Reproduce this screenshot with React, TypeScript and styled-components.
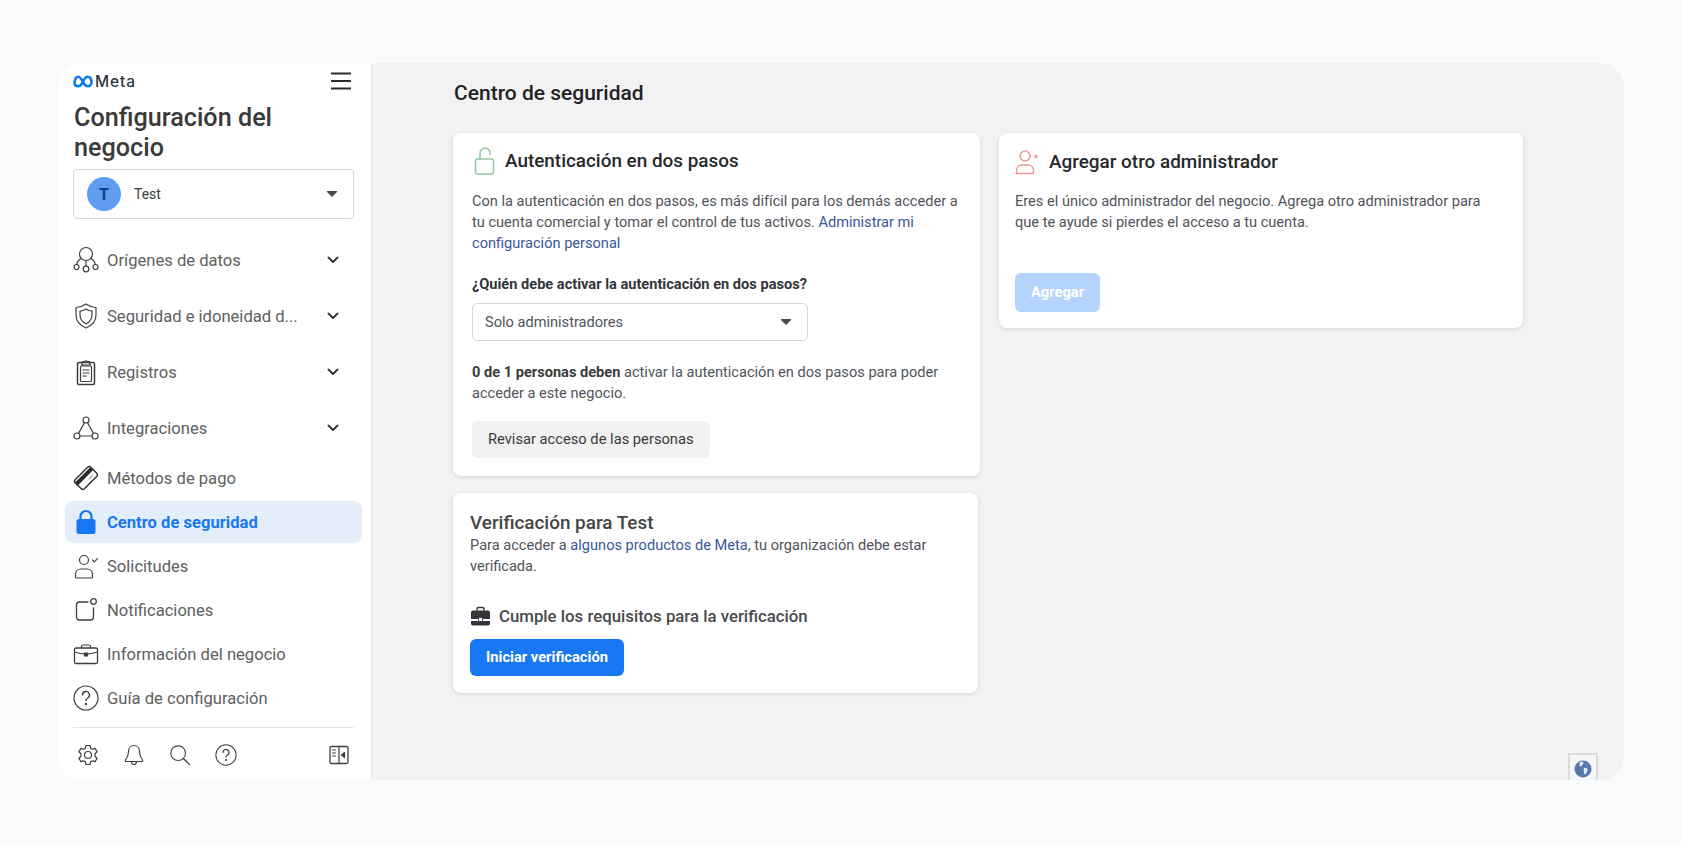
import React from 'react'
import styled, { createGlobalStyle } from 'styled-components'

const GlobalStyle = createGlobalStyle`
  html, body {
    margin: 0;
    padding: 0;
    background: #f9fafc;
    font-family: Roboto, "Liberation Sans", sans-serif;
  }
  * { box-sizing: border-box; }
`

const Page = styled.div`
  width: 1681px;
  height: 845px;
  padding: 63px 57px 65px;
  background: #f9fafc;
  overflow: hidden;
`

const Frame = styled.div`
  height: 717px;
  display: flex;
  border-radius: 24px;
  overflow: hidden;
  background: #f2f2f2;
`

const Sidebar = styled.aside`
  width: 315px;
  flex-shrink: 0;
  background: #fff;
  border-right: 1px solid #e4e4e4;
  padding: 8px 0 0 0;
  display: flex;
  flex-direction: column;
`

const TopRow = styled.div`
  height: 20px;
  padding: 0 20px 0 16px;
  display: flex;
  justify-content: space-between;
  align-items: center;
`

const Logo = styled.div`
  display: flex;
  align-items: center;
  gap: 2px;
`

const LogoWord = styled.span`
  font-family: Inter, Roboto, sans-serif;
  font-size: 15.500px;
  font-weight: 500;
  color: #2d3640;
  letter-spacing: 0.9px;
`

const Title = styled.h1`
  margin: 12px 0 0;
  padding: 0 0 0 17px;
  width: 280px;
  font-size: 25.200px;
  line-height: 30px;
  font-weight: 500;
  color: #3a3a3a;
`

const AccountBox = styled.div`
  margin: 6px 0 13px 16px;
  width: 281px;
  height: 50px;
  padding: 0 15px 0 13px;
  display: flex;
  align-items: center;
  border: 1px solid #d4d6da;
  border-radius: 4px;
  background: #fff;
`

const Avatar = styled.div`
  width: 34px;
  height: 34px;
  border-radius: 50%;
  background: #5f9df0;
  color: #0e3f8a;
  font-size: 16px;
  font-weight: 700;
  display: flex;
  align-items: center;
  justify-content: center;
`

const AccountName = styled.span`
  margin-left: 13px;
  flex: 1;
  font-size: 14px;
  color: #3c3c3c;
`

const Caret = styled.span`
  width: 0;
  height: 0;
  border-left: 6px solid transparent;
  border-right: 6px solid transparent;
  border-top: 6px solid #4a4a4a;
  border-radius: 2px;
`

const Nav = styled.nav`
  display: flex;
  flex-direction: column;
`

const NavRow = styled.div<{ $tall?: boolean; $active?: boolean }>`
  height: ${p => (p.$tall ? '56px' : '44px')};
  display: flex;
  align-items: center;
  padding: 0 32px 0 16px;
  font-size: 16.600px;
  color: ${p => (p.$active ? '#1877f2' : '#606060')};
  font-weight: ${p => (p.$active ? 700 : 400)};
  position: relative;
  z-index: 0;
  ${p =>
    p.$active &&
    `
    &::before {
      content: '';
      position: absolute;
      left: 8px;
      right: 9px;
      top: 1px;
      bottom: 1px;
      background: #e3eefa;
      border-radius: 8px;
      z-index: -1;
    }
  `}
`

const NavIcon = styled.span`
  width: 26px;
  height: 26px;
  margin-right: 8px;
  display: flex;
  align-items: center;
  justify-content: center;
  flex-shrink: 0;
`

const NavLabel = styled.span`
  flex: 1;
  white-space: nowrap;
`

const Divider = styled.div`
  margin: 7px 17px 0 16px;
  height: 1px;
  background: #e4e4e4;
`

const BottomBar = styled.div`
  display: flex;
  align-items: center;
  padding: 16px 0 0 20px;
`

const BottomIcon = styled.span<{ $push?: boolean }>`
  width: ${p => (p.$push ? 'auto' : '46px')};
  flex-shrink: 0;
  display: flex;
  justify-content: flex-start;
  margin-left: ${p => (p.$push ? '68px' : '0')};
`

const Main = styled.main`
  flex: 1;
  position: relative;
  padding: 16px 0 0 81px;
`

const Heading = styled.h2`
  margin: 0 0 26px 1px;
  font-size: 21px;
  line-height: 28px;
  font-weight: 500;
  color: #1f2226;
`

const Columns = styled.div`
  display: flex;
  gap: 19px;
  align-items: flex-start;
`

const Column = styled.div<{ $width: number }>`
  width: ${p => p.$width}px;
  display: flex;
  flex-direction: column;
  gap: 17px;
`

const Card = styled.section<{ $pad: string; $inset?: number }>`
  background: #fff;
  border-radius: 8px;
  box-shadow: 0 1px 4px rgba(0, 0, 0, 0.12);
  padding: ${p => p.$pad};
  margin-right: ${p => p.$inset ?? 0}px;
`

const CardHead = styled.div<{ $gap: number }>`
  height: 28px;
  display: flex;
  align-items: center;
  gap: ${p => p.$gap}px;
`

const CardTitle = styled.h3`
  margin: 0;
  font-size: 18.900px;
  line-height: 24px;
  font-weight: 500;
  color: #26282b;
`

const PlainTitle = styled(CardTitle)`
  color: #444;
`

const Text = styled.p<{ $top?: number }>`
  margin: ${p => p.$top ?? 0}px 0 0;
  font-size: 14.600px;
  line-height: 21px;
  color: #50545b;
`

const Strong = styled.strong`
  font-weight: 700;
  color: #3a3a3a;
`

const Link = styled.a`
  color: #385898;
`

const Label = styled.div`
  margin-top: 20px;
  font-size: 14.600px;
  line-height: 21px;
  font-weight: 700;
  color: #33363a;
`

const Select = styled.div`
  margin-top: 8px;
  width: 336px;
  height: 38px;
  padding: 0 15px 0 12px;
  display: flex;
  align-items: center;
  justify-content: space-between;
  border: 1px solid #d4d6da;
  border-radius: 5px;
  font-size: 14.600px;
  color: #50545b;
`

const Button = styled.button<{ $kind: 'gray' | 'blue' | 'pale' }>`
  display: block;
  border: none;
  border-radius: 6px;
  font-family: inherit;
  font-size: 14.700px;
  padding: 0 16px 1px;
  height: ${p => (p.$kind === 'pale' ? '39px' : '37px')};
  font-weight: ${p => (p.$kind === 'gray' ? 400 : 700)};
  background: ${p => (p.$kind === 'gray' ? '#f1f1f1' : p.$kind === 'blue' ? '#1877f2' : '#b3d5fd')};
  color: ${p => (p.$kind === 'gray' ? '#3a3a3a' : '#fff')};
`

const GrayButton = styled(Button)`
  margin-top: 17px;
`

const BlueButton = styled(Button)`
  margin-top: 11px;
`

const PaleButton = styled(Button)`
  margin-top: 40px;
`

const Requirement = styled.div`
  margin-top: 27px;
  height: 24px;
  display: flex;
  align-items: center;
  gap: 8px;
  font-size: 16.800px;
  font-weight: 500;
  color: #484a4e;
`

const GlobeTab = styled.div`
  position: absolute;
  right: 26px;
  bottom: 0;
  width: 30px;
  height: 27px;
  background: #f5f6f7;
  border: 2px solid #d9dbde;
  border-bottom: none;
  border-radius: 2px 2px 0 0;
  display: flex;
  justify-content: center;
  padding-top: 5px;
`

const ico = { fill: 'none', stroke: '#3f3f3f', strokeWidth: 1.2, strokeLinecap: 'round', strokeLinejoin: 'round' } as const

const MetaMark = () => (
  <svg width="20" height="13" viewBox="0 0 20 13">
    <path
      d="M1.500 8.300C1.500 4.500 3 1.800 5 1.800c2.200 0 3.800 2.800 5 5 1.200 2.400 2.400 4.400 4.600 4.400 2.300 0 3.900-1.700 3.900-4.500 0-2.900-1.600-4.900-3.800-4.900-2.200 0-3.700 2.500-4.700 4.800-1.200 2.500-2.500 4.600-4.700 4.600-2 0-3.800-.8-3.800-2.900z"
      fill="none"
      stroke="#0a7cf0"
      strokeWidth="2.600"
    />
  </svg>
)

const Burger = () => (
  <svg width="20" height="18" viewBox="0 0 20 18">
    <path d="M0 1.500h20M0 9h20M0 16.500h20" stroke="#2b2b2b" strokeWidth="2" />
  </svg>
)

const Chevron = () => (
  <svg width="12" height="8" viewBox="0 0 12 8">
    <path d="M1.500 1.500 6 6l4.500-4.500" fill="none" stroke="#3a3a3a" strokeWidth="2" strokeLinecap="round" strokeLinejoin="round" />
  </svg>
)

const SourcesIcon = () => (
  <svg width="26" height="28" viewBox="0 0 26 28" {...ico}>
    <circle cx="13" cy="8" r="6.500" />
    <path d="M8 12.500C5.500 14 4 16 3.800 18.500M18 12.500c2.500 1.500 4 3.500 4.200 6M13 14.500V20" />
    <circle cx="3.500" cy="21" r="2.500" />
    <circle cx="13" cy="23" r="2.800" />
    <circle cx="22.500" cy="21" r="2.500" />
  </svg>
)

const ShieldIcon = () => (
  <svg width="26" height="28" viewBox="0 0 26 28" {...ico}>
    <path d="M13 2c3 2.200 6 3.200 10 3.500V13c0 6-4 10.500-10 13C7 23.500 3 19 3 13V5.500C7 5.200 10 4.200 13 2z" />
    <path d="M13 7c1.800 1.300 3.800 2 6 2.200V13c0 4-2.500 7-6 8.800C9.500 20 7 17 7 13V9.200C9.200 9 11.200 8.300 13 7z" />
  </svg>
)

const ClipboardIcon = () => (
  <svg width="26" height="28" viewBox="0 0 26 28" {...ico}>
    <rect x="4.500" y="4.500" width="17" height="22" rx="1.500" strokeWidth="1.500" />
    <rect x="7.500" y="8" width="11" height="15.500" rx="1" />
    <path d="M9.500 4.500V3.500h2.200a1.500 1.500 0 0 1 2.600 0h2.200v1.700l1 1.800H8.500z" />
    <path d="M10 12h6M10 15h6M10 18h3.500" />
  </svg>
)

const TriangleIcon = () => (
  <svg width="26" height="26" viewBox="0 0 26 26" {...ico}>
    <circle cx="13" cy="5" r="3" />
    <circle cx="4" cy="21" r="3" />
    <circle cx="22" cy="21" r="3" />
    <path d="M11.500 7.600 5.500 18.400M14.500 7.600l6 10.800M7 21h12" />
  </svg>
)

const CardIcon = () => (
  <svg width="26" height="26" viewBox="0 0 26 26">
    <g transform="rotate(-45 13 13)">
      <rect x="2" y="6.500" width="22" height="13" rx="2.500" fill="#fff" stroke="#2b2b2b" strokeWidth="1.400" />
      <rect x="2" y="8.500" width="22" height="4" fill="#2b2b2b" />
      <path d="M14 16h6" stroke="#9a9a9a" strokeWidth="1.200" />
    </g>
  </svg>
)

const LockSolid = () => (
  <svg width="22" height="26" viewBox="0 0 22 26">
    <path d="M5.500 11V7.500a5.500 5.500 0 0 1 11 0V11" fill="none" stroke="#1877f2" strokeWidth="2.200" />
    <rect x="1.500" y="10" width="19" height="15" rx="2.500" fill="#1877f2" />
  </svg>
)

const PersonCheckIcon = () => (
  <svg width="26" height="26" viewBox="0 0 26 26" {...ico}>
    <circle cx="11" cy="7" r="4.500" />
    <path d="M2.500 24v-2.500C2.500 18 5 16 8 16h6c3 0 5.500 2 5.500 5.500V24c0 .5-.5 1-1 1h-15c-.5 0-1-.5-1-1z" />
    <path d="m19.500 7 1.800 1.800 3.200-3.200" />
  </svg>
)

const NotifyIcon = () => (
  <svg width="26" height="26" viewBox="0 0 26 26" {...ico}>
    <path d="M15 5H6.500A3 3 0 0 0 3.500 8v12a3 3 0 0 0 3 3h11a3 3 0 0 0 3-3v-9" strokeWidth="1.300" />
    <circle cx="20.500" cy="4.500" r="2.800" strokeWidth="1.300" />
  </svg>
)

const BriefcaseIcon = () => (
  <svg width="26" height="24" viewBox="0 0 26 24" {...ico}>
    <rect x="1.500" y="6" width="23" height="15.500" rx="1.500" strokeWidth="1.300" />
    <path d="M8.500 6V4.500c0-.8.700-1.500 1.500-1.500h6c.8 0 1.500.7 1.500 1.500V6M1.500 10c7 2.500 16 2.500 23 0" />
    <rect x="11.500" y="11" width="3" height="3" fill="#3f3f3f" />
  </svg>
)

const HelpIcon = ({ size = 26 }: { size?: number }) => (
  <svg width={size} height={size} viewBox="0 0 26 26" {...ico}>
    <circle cx="13" cy="13" r="12" />
    <path d="M9.500 10a3.500 3.500 0 1 1 5.200 3c-1.200.7-1.700 1.400-1.700 2.500" strokeWidth="1.400" />
    <circle cx="13" cy="19" r=".6" fill="#3f3f3f" />
  </svg>
)

const GearIcon = () => (
  <svg width="22" height="22" viewBox="0 0 22 22" {...ico}>
    <path d="M9 1.500h4l.6 2.800 1.800 1 2.700-.9 2 3.400-2.100 1.900v2.600l2.100 1.900-2 3.400-2.700-.9-1.800 1-.6 2.800H9l-.6-2.800-1.800-1-2.700.9-2-3.400L4 12.300V9.700L1.900 7.800l2-3.400 2.700.9 1.800-1z" />
    <circle cx="11" cy="11" r="3.500" />
  </svg>
)

const BellIcon = () => (
  <svg width="22" height="22" viewBox="0 0 22 22" {...ico}>
    <path d="M11 1.500c-3.500 0-5.500 2.800-5.500 6 0 4-1 6-3 8.500-.5.700-.2 1.500.7 1.500h15.600c.9 0 1.200-.8.700-1.500-2-2.500-3-4.500-3-8.500 0-3.200-2-6-5.500-6z" />
    <path d="M8.500 17.500c0 2 1 3 2.500 3s2.500-1 2.500-3" />
  </svg>
)

const SearchIcon = () => (
  <svg width="22" height="22" viewBox="0 0 24 24" {...ico}>
    <circle cx="10" cy="10" r="8" />
    <path d="m16 16 6.500 6.500" strokeWidth="1.500" />
  </svg>
)

const PanelIcon = () => (
  <svg width="20" height="20" viewBox="0 0 20 20" {...ico}>
    <rect x="1" y="1.500" width="18" height="17" rx="1.500" strokeWidth="1.300" />
    <path d="M10 1.500v17M3.500 5h3M3.500 8h3M3.500 11h3" />
    <path d="m15.500 7.500-3 2.500 3 2.500z" fill="#3f3f3f" />
  </svg>
)

const OpenLock = () => (
  <svg width="24" height="28" viewBox="0 0 24 28" fill="none" stroke="#8fc7a0" strokeWidth="1.500">
    <rect x="3.500" y="12" width="18" height="15" rx="2" />
    <path d="M8 12V6a5 5 0 0 1 10 0v1.500" strokeLinecap="round" />
  </svg>
)

const PersonXIcon = () => (
  <svg width="24" height="26" viewBox="0 0 24 26" fill="none" stroke="#e89a96" strokeWidth="1.400">
    <circle cx="10" cy="7" r="5" />
    <path d="M1.500 24.500v-3c0-3.500 2.500-5.500 5.500-5.500h6c3 0 5.500 2 5.500 5.500v3z" strokeLinejoin="round" />
    <path d="m19.500 6 3 3m0-3-3 3" strokeWidth="1.300" />
  </svg>
)

const CaseSolid = () => (
  <svg width="21" height="21" viewBox="0 0 21 21">
    <path d="M7 4.500V3c0-.8.700-1.500 1.500-1.500h4c.8 0 1.500.7 1.500 1.500v1.500" fill="none" stroke="#33363a" strokeWidth="1.500" />
    <path d="M1 6.500C1 5.400 1.900 4.500 3 4.500h15c1.100 0 2 .9 2 2V13H1z" fill="#33363a" />
    <path d="M1 15h19v2.500c0 1.100-.9 2-2 2H3c-1.100 0-2-.9-2-2z" fill="#33363a" />
    <rect x="8.500" y="11.500" width="4" height="4" rx="1" fill="#fff" stroke="#33363a" />
  </svg>
)

const Globe = () => (
  <svg width="18" height="18" viewBox="0 0 18 18">
    <circle cx="9" cy="9" r="8.500" fill="#5b78ad" />
    <path d="M6 2c1.500-.5 3 0 3.500 1 .3 1-1 1.500-1.500 2.500S6.500 7 6 6 5 3 6 2zM10 8c1.500-.5 3.500.5 3.500 2s-1 3-2 4-1.500-1-1.500-2-1-3.500 0-4z" fill="#e8edf5" />
  </svg>
)

const navItems = [
  { label: 'Orígenes de datos', icon: <SourcesIcon />, tall: true },
  { label: 'Seguridad e idoneidad d...', icon: <ShieldIcon />, tall: true },
  { label: 'Registros', icon: <ClipboardIcon />, tall: true },
  { label: 'Integraciones', icon: <TriangleIcon />, tall: true },
  { label: 'Métodos de pago', icon: <CardIcon /> },
  { label: 'Centro de seguridad', icon: <LockSolid />, active: true },
  { label: 'Solicitudes', icon: <PersonCheckIcon /> },
  { label: 'Notificaciones', icon: <NotifyIcon /> },
  { label: 'Información del negocio', icon: <BriefcaseIcon /> },
  { label: 'Guía de configuración', icon: <HelpIcon /> },
]

const App: React.FC = () => {
  return (
    <Page>
      <GlobalStyle />
      <Frame>
        <Sidebar>
          <TopRow>
            <Logo>
              <MetaMark />
              <LogoWord>Meta</LogoWord>
            </Logo>
            <Burger />
          </TopRow>
          <Title>Configuración del negocio</Title>
          <AccountBox>
            <Avatar>T</Avatar>
            <AccountName>Test</AccountName>
            <Caret />
          </AccountBox>
          <Nav>
            {navItems.map(item => (
              <NavRow key={item.label} $tall={item.tall} $active={item.active}>
                <NavIcon>{item.icon}</NavIcon>
                <NavLabel>{item.label}</NavLabel>
                {item.tall && <Chevron />}
              </NavRow>
            ))}
          </Nav>
          <Divider />
          <BottomBar>
            <BottomIcon><GearIcon /></BottomIcon>
            <BottomIcon><BellIcon /></BottomIcon>
            <BottomIcon><SearchIcon /></BottomIcon>
            <BottomIcon><HelpIcon size={22} /></BottomIcon>
            <BottomIcon $push><PanelIcon /></BottomIcon>
          </BottomBar>
        </Sidebar>
        <Main>
          <Heading>Centro de seguridad</Heading>
          <Columns>
            <Column $width={527}>
              <Card $pad="14px 18px 18px 19px">
                <CardHead $gap={9}>
                  <OpenLock />
                  <CardTitle>Autenticación en dos pasos</CardTitle>
                </CardHead>
                <Text $top={16}>
                  Con la autenticación en dos pasos, es más difícil para los demás acceder a tu cuenta comercial y tomar el control de tus activos. <Link>Administrar mi configuración personal</Link>
                </Text>
                <Label>¿Quién debe activar la autenticación en dos pasos?</Label>
                <Select>
                  Solo administradores
                  <Caret />
                </Select>
                <Text $top={21}>
                  <Strong>0 de 1 personas deben</Strong> activar la autenticación en dos pasos para poder acceder a este negocio.
                </Text>
                <GrayButton $kind="gray">Revisar acceso de las personas</GrayButton>
              </Card>
              <Card $pad="18px 17px 17px 17px" $inset={2}>
                <PlainTitle>Verificación para Test</PlainTitle>
                <Text>
                  Para acceder a <Link>algunos productos de Meta</Link>, tu organización debe estar verificada.
                </Text>
                <Requirement>
                  <CaseSolid />
                  Cumple los requisitos para la verificación
                </Requirement>
                <BlueButton $kind="blue">Iniciar verificación</BlueButton>
              </Card>
            </Column>
            <Column $width={524}>
              <Card $pad="15px 16px 16px 16px">
                <CardHead $gap={10}>
                  <PersonXIcon />
                  <CardTitle>Agregar otro administrador</CardTitle>
                </CardHead>
                <Text $top={15}>
                  Eres el único administrador del negocio. Agrega otro administrador para que te ayude si pierdes el acceso a tu cuenta.
                </Text>
                <PaleButton $kind="pale">Agregar</PaleButton>
              </Card>
            </Column>
          </Columns>
          <GlobeTab>
            <Globe />
          </GlobeTab>
        </Main>
      </Frame>
    </Page>
  )
}

export default App
